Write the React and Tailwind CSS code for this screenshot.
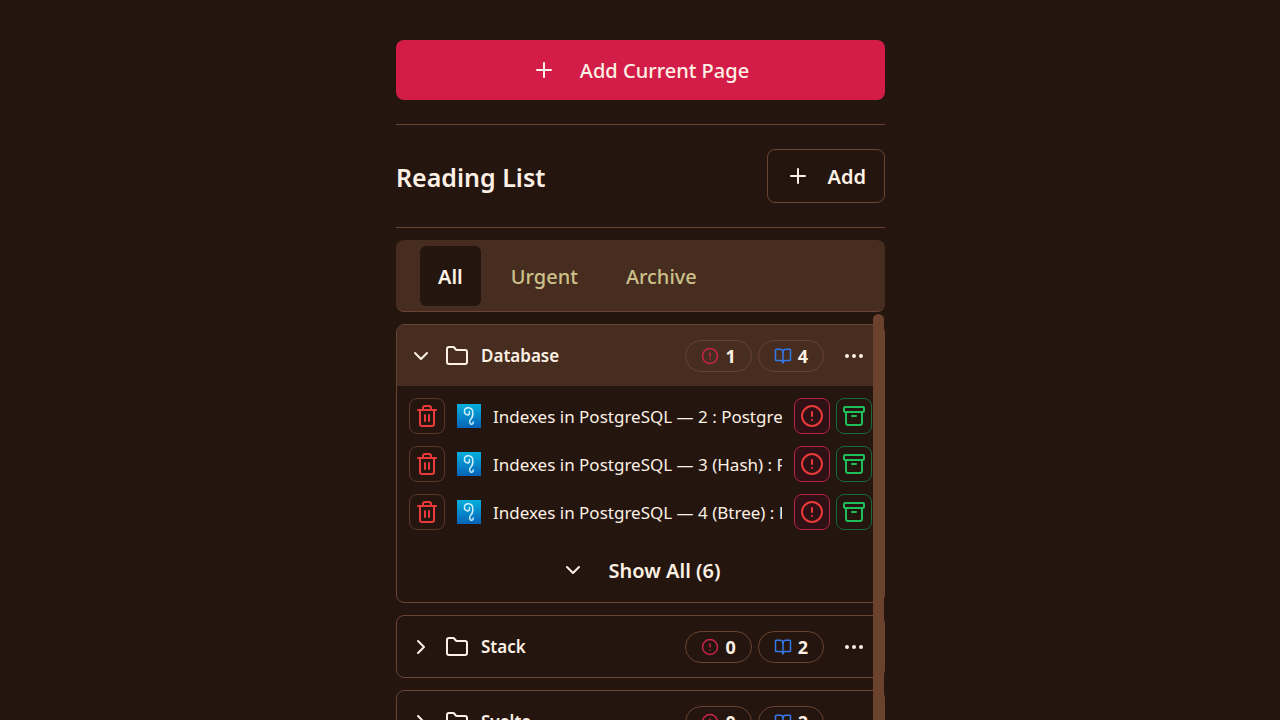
import { useState } from "react";
import {
  Archive,
  BookOpen,
  ChevronDown,
  ChevronRight,
  CircleAlert,
  Ellipsis,
  Folder,
  Plus,
  Trash2,
} from "lucide-react";

const TABS = ["All", "Urgent", "Archive"];

const GROUPS = [
  {
    name: "Database",
    urgent: 1,
    unread: 4,
    total: 6,
    items: [
      "Indexes in PostgreSQL — 2 : Postgres Professional",
      "Indexes in PostgreSQL — 3 (Hash) : Postgres Professional",
      "Indexes in PostgreSQL — 4 (Btree) : Postgres Professional",
    ],
  },
  { name: "Stack", urgent: 0, unread: 2, total: 2, items: [] },
  { name: "Svelte", urgent: 0, unread: 2, total: 2, items: [] },
];

function ElephantIcon() {
  return (
    <svg viewBox="0 0 24 24" className="size-6 shrink-0" aria-hidden="true">
      <defs>
        <linearGradient id="favicon-sky" x1="0" y1="0" x2="0" y2="1">
          <stop offset="0" stopColor="#06b0dc" />
          <stop offset="1" stopColor="#0763b8" />
        </linearGradient>
      </defs>
      <rect width="24" height="24" fill="url(#favicon-sky)" />
      <path
        d="M11 11C8.800 10.800 7.300 9 7.400 7C7.600 4.800 9.400 3.600 11.400 3.700C14 3.900 15.800 5.800 15.800 8.400C15.800 11.200 15.400 12.600 14.600 14M11 11C12.600 10.600 12.800 9.200 12.400 7.400M15.800 9.400C16.200 12 15 14.200 13.200 15.800M13.200 15.800C12.400 17.600 12.600 20 14.200 20.200C15.600 20.300 16.400 19.200 16.200 18"
        fill="none"
        stroke="#d3f1fb"
        strokeWidth="1.4"
        strokeLinecap="round"
        strokeLinejoin="round"
      />
    </svg>
  );
}

function Label({ children }) {
  return <span className="pt-0.5">{children}</span>;
}

function Badge({ children }) {
  return (
    <span className="flex h-8 items-center gap-1.5 rounded-full border border-[#69422f] px-[15px] text-lg font-bold">
      {children}
    </span>
  );
}

function Item({ title }) {
  return (
    <li className="flex items-center gap-3">
      <button
        type="button"
        aria-label="Delete"
        className="flex size-9 shrink-0 items-center justify-center rounded-lg border border-[#5a3828] text-[#e93a3a]"
      >
        <Trash2 className="shrink-0" />
      </button>
      <ElephantIcon />
      <a href="#item" className="min-w-0 flex-1 overflow-hidden pt-0.5 text-[17px] leading-6 whitespace-nowrap">
        {title}
      </a>
      <div className="flex gap-1.5">
        <button
          type="button"
          aria-label="Mark as urgent"
          className="flex size-9 items-center justify-center rounded-lg border border-[#b5254b] bg-[#2f1015] text-[#e93a3a]"
        >
          <CircleAlert />
        </button>
        <button
          type="button"
          aria-label="Archive"
          className="flex size-9 items-center justify-center rounded-lg border border-[#176a38] text-[#1fbe58]"
        >
          <Archive />
        </button>
      </div>
    </li>
  );
}

function Group({ group, open, onToggle }) {
  const Chevron = open ? ChevronDown : ChevronRight;
  return (
    <section className="shrink-0 overflow-hidden rounded-lg border border-[#6b4332]">
      <header className={open ? "flex h-[61px] items-center gap-3 bg-[#472c20] px-3" : "flex h-[61px] items-center gap-3 px-3"}>
        <button
          type="button"
          aria-expanded={open}
          onClick={onToggle}
          className="flex min-w-0 flex-1 items-center gap-3 text-[17px] font-semibold"
        >
          <Chevron className="shrink-0" />
          <Folder className="shrink-0" />
          {group.name}
        </button>
        <div className="flex gap-1.5">
          <Badge>
            <CircleAlert size={18} className="text-[#c9234b]" />
            {group.urgent}
          </Badge>
          <Badge>
            <BookOpen size={18} className="text-[#3578ea]" />
            {group.unread}
          </Badge>
        </div>
        <button type="button" aria-label="More actions" className="flex size-9 items-center justify-center">
          <Ellipsis />
        </button>
      </header>
      {open && group.items.length > 0 && (
        <>
          <ul className="flex flex-col gap-3 px-3 pt-3 pb-2.5">
            {group.items.map((title) => (
              <Item key={title} title={title} />
            ))}
          </ul>
          <button type="button" className="mb-0.5 flex h-[60px] w-full items-center justify-center gap-6 text-xl font-semibold">
            <ChevronDown />
            <Label>Show All ({group.total})</Label>
          </button>
        </>
      )}
    </section>
  );
}

export default function App() {
  const [tab, setTab] = useState("All");
  const [openGroup, setOpenGroup] = useState("Database");

  return (
    <div className="h-screen overflow-hidden bg-[#24160f] pl-px font-['Noto_Sans',sans-serif] text-[#fdf0e4]">
      <main className="mx-auto flex h-full w-full max-w-[489px] flex-col pt-10">
        <button
          type="button"
          className="flex h-15 w-full shrink-0 items-center justify-center gap-6 rounded-lg bg-[#d31d48] text-xl font-medium"
        >
          <Plus />
          <Label>Add Current Page</Label>
        </button>

        <div className="mt-6 flex items-center justify-between border-y border-[#6b4332] py-6">
          <h1 className="pt-0.5 text-[25px] leading-9 font-semibold">Reading List</h1>
          <button
            type="button"
            className="flex h-[54px] items-center gap-[18px] rounded-lg border border-[#6b4332] px-[18px] text-xl font-semibold"
          >
            <Plus />
            <Label>Add</Label>
          </button>
        </div>

        <nav className="mt-3 flex shrink-0 gap-3 rounded-lg border-b border-[#6b4332] bg-[#472c20] px-6 pt-1.5 pb-[5px]">
          {TABS.map((name) => (
            <button
              key={name}
              type="button"
              aria-pressed={tab === name}
              onClick={() => setTab(name)}
              className={
                tab === name
                  ? "flex h-15 items-center rounded-md bg-[#24160f] px-[18px] text-xl font-semibold"
                  : "flex h-15 items-center rounded-md px-[18px] text-xl font-medium text-[#ccc18a]"
              }
            >
              <Label>{name}</Label>
            </button>
          ))}
        </nav>

        <div className="relative min-h-0 flex-1">
          <div className="flex h-full flex-col gap-3 overflow-y-auto pt-3 [scrollbar-width:none]">
            {GROUPS.map((group) => (
              <Group
                key={group.name}
                group={group}
                open={openGroup === group.name}
                onToggle={() => setOpenGroup(openGroup === group.name ? "" : group.name)}
              />
            ))}
          </div>
          <div className="absolute top-0.5 right-px bottom-0 w-[11px] rounded-t-full bg-[#6b422e]" />
        </div>
      </main>
    </div>
  );
}
